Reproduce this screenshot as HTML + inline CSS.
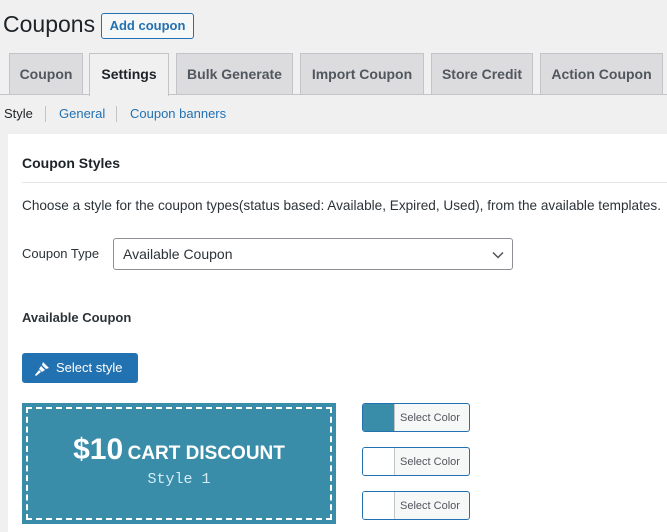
<!DOCTYPE html>
<html><head><style>
body{margin:0;width:667px;height:532px;overflow:hidden;background:#f0f0f1;font-family:"Liberation Sans",sans-serif;color:#1d2327;position:relative}
.a{position:absolute}
h1{position:absolute;left:3px;top:11px;margin:0;font-size:23px;font-weight:400;color:#1d2327}
.add{left:101px;top:13px;width:91px;height:24px;border:1px solid #2271b1;border-radius:3px;background:#f6f7f7;color:#2271b1;font-size:13px;font-weight:700;line-height:24px;text-align:center}
.tab{top:53px;height:41px;background:#dcdcde;border:1px solid #c3c4c7;border-bottom:none;font-size:14px;font-weight:700;color:#50575e;line-height:41px;text-align:center;box-sizing:border-box}
.tab.on{background:#f0f0f1;color:#1d2327;height:43px}
.sub{top:106px;font-size:13px;color:#2271b1}
.sep{top:106px;width:1px;height:16px;background:#c3c4c7}
.panel{left:8px;top:134px;width:659px;height:398px;background:#fff}
</style></head><body>
<h1>Coupons</h1>
<div class="a add">Add coupon</div>
<div class="a" style="left:0;top:94px;width:667px;height:1px;background:#c3c4c7"></div>
<div class="a tab" style="left:9px;width:74px">Coupon</div>
<div class="a tab on" style="left:89px;width:80px">Settings</div>
<div class="a tab" style="left:176px;width:117px">Bulk Generate</div>
<div class="a tab" style="left:300px;width:124px">Import Coupon</div>
<div class="a tab" style="left:431px;width:102px">Store Credit</div>
<div class="a tab" style="left:540px;width:123px">Action Coupon</div>
<div class="a sub" style="left:4px;color:#1d2327">Style</div>
<div class="a sep" style="left:45px"></div>
<div class="a sub" style="left:59px">General</div>
<div class="a sep" style="left:116px"></div>
<div class="a sub" style="left:130px">Coupon banners</div>
<div class="a panel"></div>
<div class="a" style="left:22px;top:155px;font-size:14px;font-weight:700">Coupon Styles</div>
<div class="a" style="left:22px;top:182px;width:645px;height:1px;background:#e6e6e6"></div>
<div class="a" style="left:22px;top:198px;font-size:13.6px;color:#2c3338;white-space:nowrap">Choose a style for the coupon types(status based: Available, Expired, Used), from the available templates.</div>
<div class="a" style="left:22px;top:246px;font-size:13px;color:#2c3338">Coupon Type</div>
<div class="a" style="left:113px;top:238px;width:400px;height:32px;border:1px solid #8c8f94;border-radius:3px;box-sizing:border-box;font-size:14px;line-height:30px;padding-left:9px;color:#2c3338">Available Coupon
<svg class="a" style="right:8px;top:12px" width="12" height="8" viewBox="0 0 12 8"><path d="M1 1.5l5 5 5-5" fill="none" stroke="#50575e" stroke-width="1.5"/></svg></div>
<div class="a" style="left:22px;top:310px;font-size:13px;font-weight:700;color:#2c3338">Available Coupon</div>
<div class="a" style="left:22px;top:353px;width:116px;height:30px;background:#2271b1;border-radius:3px;color:#fff;font-size:13px;line-height:30px">
<svg class="a" style="left:12px;top:7px" width="17" height="16" viewBox="0 0 17 16"><path d="M9 2l6 6-3 1-4-4z M7 6l4 4-3 2-3-3z M5 10l2 2-5 4-1-1z" fill="#fff"/></svg>
<span style="position:absolute;left:34px">Select style</span></div>
<div class="a" style="left:22px;top:403px;width:314px;height:121px;background:#3a8da9"></div>
<div class="a" style="left:26px;top:407px;width:306px;height:113px;border:2px dashed #fff;box-sizing:border-box"></div>
<div class="a" style="left:22px;top:433px;width:314px;text-align:center;color:#fff;font-weight:700;white-space:nowrap"><span style="font-size:30px">$10</span> <span style="font-size:19px">CART DISCOUNT</span></div>
<div class="a" style="left:22px;top:471px;width:314px;text-align:center;color:#d4eef7;font-family:'Liberation Mono',monospace;font-size:15px">Style 1</div>
<div class="a" style="left:362px;top:403px;width:108px;height:29px;border:1px solid #2271b1;border-radius:3px;box-sizing:border-box;background:#f6f7f7;overflow:hidden"><div style="position:absolute;left:0;top:0;width:31px;height:100%;background:#3a8da9;border-right:1px solid #c3c4c7"></div><span style="position:absolute;left:37px;top:8px;font-size:11px;color:#50575e">Select Color</span></div>
<div class="a" style="left:362px;top:447px;width:108px;height:29px;border:1px solid #2271b1;border-radius:3px;box-sizing:border-box;background:#f6f7f7;overflow:hidden"><div style="position:absolute;left:0;top:0;width:31px;height:100%;background:#fff;border-right:1px solid #c3c4c7"></div><span style="position:absolute;left:37px;top:8px;font-size:11px;color:#50575e">Select Color</span></div>
<div class="a" style="left:362px;top:491px;width:108px;height:29px;border:1px solid #2271b1;border-radius:3px;box-sizing:border-box;background:#f6f7f7;overflow:hidden"><div style="position:absolute;left:0;top:0;width:31px;height:100%;background:#fff;border-right:1px solid #c3c4c7"></div><span style="position:absolute;left:37px;top:8px;font-size:11px;color:#50575e">Select Color</span></div>
</body></html>
